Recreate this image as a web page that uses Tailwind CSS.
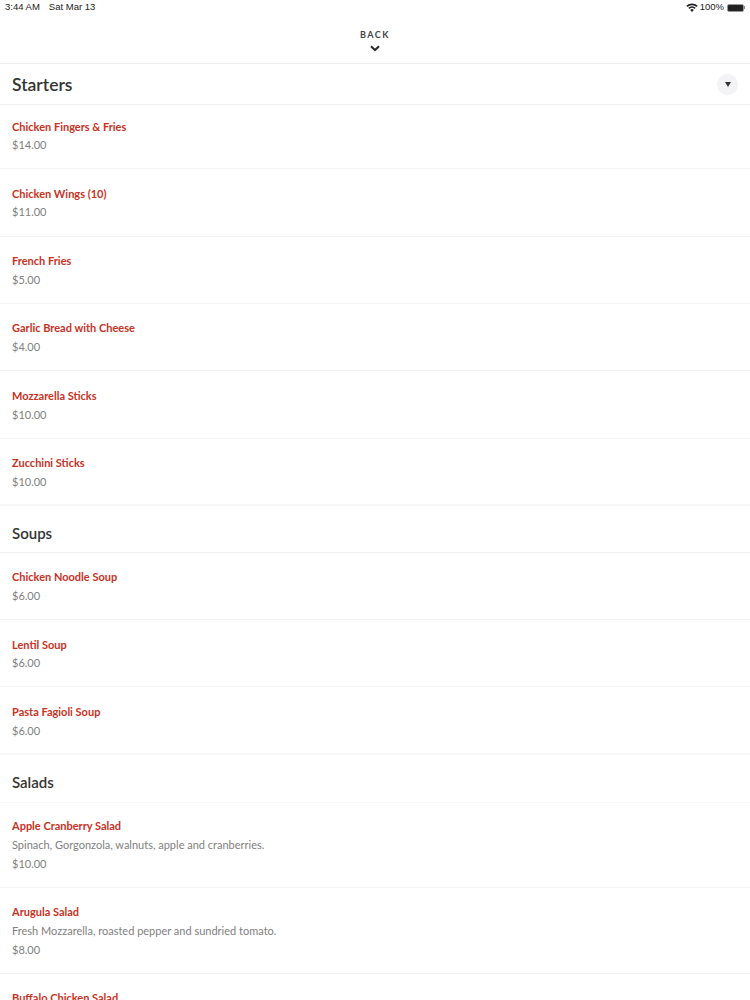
<!DOCTYPE html>
<html lang="en">
<head>
<meta charset="UTF-8">
<title>Menu</title>
<script src="https://cdn.jsdelivr.net/npm/@tailwindcss/browser@4"></script>
</head>
<body class="bg-white font-['Lato',sans-serif] h-[1000px] overflow-hidden">
  <!-- status bar -->
  <div class="h-[15px] px-[5px] flex items-center justify-between font-['Liberation_Sans',sans-serif] text-[9.5px] text-[#222]">
    <div class="flex gap-[9px]"><span>3:44 AM</span><span>Sat Mar 13</span></div>
    <div class="flex items-center gap-[2px]">
      <svg width="12" height="9" viewBox="0 0 12 9" fill="#222"><path d="M6 9 4.2 6.9a2.6 2.6 0 0 1 3.6 0zM3.4 6 2.3 4.8a5.3 5.3 0 0 1 7.4 0L8.6 6a3.8 3.8 0 0 0-5.2 0zM1.5 4 .3 2.8a8.1 8.1 0 0 1 11.4 0L10.5 4a6.5 6.5 0 0 0-9 0z"/></svg>
      <span>100%</span>
      <div class="flex items-center ml-[1px]">
        <div class="w-[17px] h-[8px] rounded-[2px] bg-[#222] border border-[#999]"></div>
        <div class="w-[1px] h-[3px] bg-[#888]"></div>
      </div>
    </div>
  </div>
  <!-- back -->
  <div class="h-[49px] border-b border-[#ececec] flex flex-col items-center pt-[14px]">
    <span class="text-[9px] leading-[11px] font-bold tracking-[1.5px] text-[#444]">BACK</span>
    <svg class="mt-[5px]" width="10" height="7" viewBox="0 0 10 7" fill="none" stroke="#2b2b2b" stroke-width="2"><path d="M1 1.2 5 5l4-3.8"/></svg>
  </div>

  <div class="h-[41px] border-b border-[#f0f0f0] flex items-center justify-between pl-3 pr-[12px]">
    <h2 class="pt-[2px] text-[17.5px] font-semibold text-[#333]">Starters</h2>
    <div class="w-[21px] h-[21px] rounded-full bg-[#f3f2f4] flex items-center justify-center">
      <svg width="6" height="5" viewBox="0 0 6 5" fill="#333"><path d="M0 0h6L3 5z"/></svg>
    </div>
  </div>
  <div class="h-[64px] border-b border-[#f3f3f3] pl-3 pt-[14px]"><p class="text-[11px] leading-[16px] font-bold text-[#c8321f]">Chicken Fingers &amp; Fries</p><p class="mt-[2px] text-[11px] leading-[16px] text-[#808080]">$14.00</p></div>
  <div class="h-[68px] border-b border-[#f3f3f3] pl-3 pt-[17px]"><p class="text-[11px] leading-[16px] font-bold text-[#c8321f]">Chicken Wings (10)</p><p class="mt-[2px] text-[11px] leading-[16px] text-[#808080]">$11.00</p></div>
  <div class="h-[67px] border-b border-[#f3f3f3] pl-3 pt-[16px]"><p class="text-[11px] leading-[16px] font-bold text-[#c8321f]">French Fries</p><p class="mt-[3px] text-[11px] leading-[16px] text-[#808080]">$5.00</p></div>
  <div class="h-[67px] border-b border-[#f3f3f3] pl-3 pt-[16px]"><p class="text-[11px] leading-[16px] font-bold text-[#c8321f]">Garlic Bread with Cheese</p><p class="mt-[3px] text-[11px] leading-[16px] text-[#808080]">$4.00</p></div>
  <div class="h-[68px] border-b border-[#f3f3f3] pl-3 pt-[17px]"><p class="text-[11px] leading-[16px] font-bold text-[#c8321f]">Mozzarella Sticks</p><p class="mt-[3px] text-[11px] leading-[16px] text-[#808080]">$10.00</p></div>
  <div class="h-[67px] border-b-[2px] border-[#f7f7f7] pl-3 pt-[16px]"><p class="text-[11px] leading-[16px] font-bold text-[#c8321f]">Zucchini Sticks</p><p class="mt-[3px] text-[11px] leading-[16px] text-[#808080]">$10.00</p></div>

  <div class="h-[47px] border-b border-[#f0f0f0] flex items-center pl-3 pt-[9px]">
    <h2 class="text-[15px] font-semibold text-[#333]">Soups</h2>
  </div>
  <div class="h-[67px] border-b border-[#f3f3f3] pl-3 pt-[16px]"><p class="text-[11px] leading-[16px] font-bold text-[#c8321f]">Chicken Noodle Soup</p><p class="mt-[3px] text-[11px] leading-[16px] text-[#808080]">$6.00</p></div>
  <div class="h-[67px] border-b border-[#f3f3f3] pl-3 pt-[17px]"><p class="text-[11px] leading-[16px] font-bold text-[#c8321f]">Lentil Soup</p><p class="mt-[2px] text-[11px] leading-[16px] text-[#808080]">$6.00</p></div>
  <div class="h-[68px] border-b-[2px] border-[#f7f7f7] pl-3 pt-[17px]"><p class="text-[11px] leading-[16px] font-bold text-[#c8321f]">Pasta Fagioli Soup</p><p class="mt-[3px] text-[11px] leading-[16px] text-[#808080]">$6.00</p></div>

  <div class="h-[48px] border-b border-[#f8f8f8] flex items-center pl-3 pt-[8px]">
    <h2 class="text-[15px] font-semibold text-[#333]">Salads</h2>
  </div>
  <div class="h-[85px] border-b border-[#f3f3f3] pl-3 pt-[15px]"><p class="text-[11px] leading-[16px] font-bold text-[#c8321f]">Apple Cranberry Salad</p><p class="mt-[3px] text-[11px] leading-[16px] text-[#808080]">Spinach, Gorgonzola, walnuts, apple and cranberries.</p><p class="mt-[3px] text-[11px] leading-[16px] text-[#808080]">$10.00</p></div>
  <div class="h-[86px] border-b border-[#f3f3f3] pl-3 pt-[16px]"><p class="text-[11px] leading-[16px] font-bold text-[#c8321f]">Arugula Salad</p><p class="mt-[3px] text-[11px] leading-[16px] text-[#808080]">Fresh Mozzarella, roasted pepper and sundried tomato.</p><p class="mt-[3px] text-[11px] leading-[16px] text-[#808080]">$8.00</p></div>
  <div class="pl-3 pt-[16px]"><p class="text-[11px] leading-[16px] font-bold text-[#c8321f]">Buffalo Chicken Salad</p></div>
</body>
</html>
